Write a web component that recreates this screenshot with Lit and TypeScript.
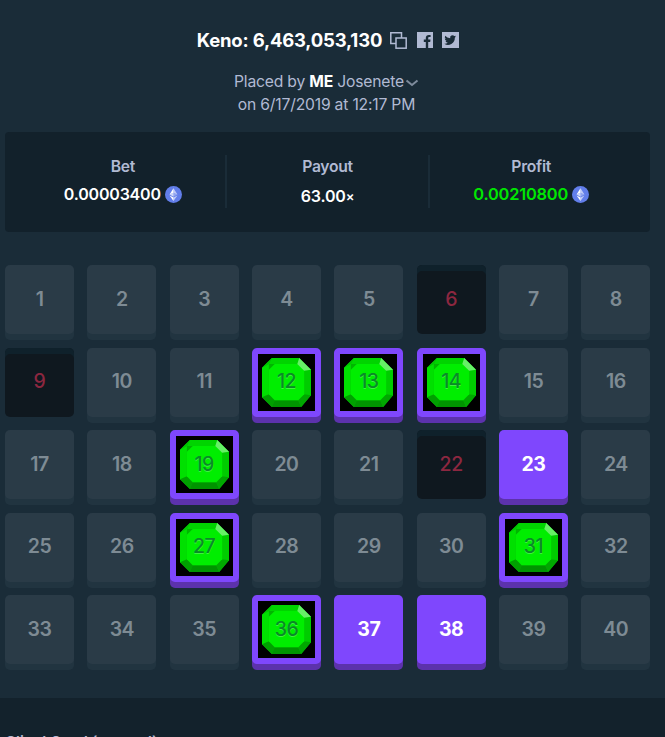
import { LitElement, html, css, svg } from "lit";
import { customElement } from "lit/decorators.js";

const HITS = new Set([12, 13, 14, 19, 27, 31, 36]);
const PICKED = new Set([23, 37, 38]);
const MISS = new Set([6, 9, 22]);

const eth = html`<svg class="eth" viewBox="0 0 16 16"><circle cx="8" cy="8" r="8" fill="#627eea"/><path d="M8 2v4.400l3.700 1.700z" fill="#fff" opacity=".6"/><path d="M8 2 4.300 8.100 8 6.400z" fill="#fff"/><path d="M8 10.900v3.100l3.700-5.100z" fill="#fff" opacity=".6"/><path d="M8 10.900V14L4.300 8.900z" fill="#fff"/><path d="M8 10.200l3.700-2.100L8 6.400z" fill="#fff" opacity=".3"/><path d="M4.300 8.100 8 10.200V6.400z" fill="#fff" opacity=".7"/></svg>`;

const gem = svg`<svg class="gem" viewBox="0 0 50 50">
<polygon points="10,0 38,0 50,12 50,38 40,50 10,50 0,40 0,10" fill="#00b500"/>
<polygon points="10,0 38,0 42,6 7,6" fill="#00d400"/>
<polygon points="0,10 10,0 7,6" fill="#00c400"/>
<polygon points="0,10 7,6 7,43 0,40" fill="#00e000"/>
<polygon points="50,12 42,6 43,43 50,38" fill="#00cc00"/>
<polygon points="0,40 7,37 13,43 10,50" fill="#00a000"/>
<polygon points="10,50 13,43 37,43 40,50" fill="#009400"/>
<polygon points="50,38 43,37 37,43 40,50" fill="#00a800"/>
<polygon points="13,6 37,6 43,12 43,37 37,43 13,43 7,37 7,12" fill="#00ee00"/>
<polygon points="38,0 50,12 43,13 36,6" fill="#66f066"/>
</svg>`;

@customElement("app-root")
export class AppRoot extends LitElement {
  static styles = css`
    :host { display: block; height: 737px; overflow: hidden; background: #1a2c38; color: #fff;
      font-family: "Inter", "Liberation Sans", sans-serif; }
    .head { display: flex; flex-direction: column; align-items: center; padding: 28px 9px 0 0; height: 104px; box-sizing: border-box; }
    .title { display: flex; align-items: center; font-size: 18.5px; font-weight: 700; line-height: 24px; height: 24px; letter-spacing: -0.2px; }
    .title svg { display: block; }
    .copy { width: 17px; height: 17px; margin-left: 8px; }
    .fb { width: 16px; height: 16px; margin-left: 10px; }
    .tw { width: 17px; height: 16px; margin-left: 9px; }
    .by { margin-top: 18px; font-size: 15.7px; line-height: 23px; color: #b1bad3; text-align: center; letter-spacing: -0.2px; padding-right: 3px; }
    .by b { color: #fff; font-weight: 700; }
    .by svg { width: 14px; height: 8px; margin-left: 1px; }
    .stats { margin: 28px 15px 0 5px; height: 100px; box-sizing: border-box; background: #12212b; border-radius: 4px;
      display: grid; grid-template-columns: 1fr 1fr 1fr; padding: 23px 18px 0 16px; }
    .stat { height: 53px; display: flex; flex-direction: column; align-items: center; }
    .stat + .stat { border-left: 2px solid #1a2c38; }
    .lab { font-size: 15.7px; line-height: 22px; color: #b1bad3; font-weight: 600; letter-spacing: -0.3px; padding-top: 1px; }
    .val { display: flex; align-items: center; font-size: 16px; font-weight: 600; line-height: 22px; margin-top: 5px; letter-spacing: -0.2px; }
    .val.pay { margin-top: 7px; }
    .val small { font-size: 13px; }
    .win { color: #00e701; font-size: 16.4px; }
    .eth { width: 17px; height: 17px; margin-left: 4px; }
    .grid { margin: 33px 14.7px 0 5px; display: grid; grid-template-columns: repeat(8, 69px); justify-content: space-between; row-gap: 7.5px; }
    .t { position: relative; height: 75px; box-sizing: border-box; }
    .face { height: 69px; border-radius: 5px; background: #2a3b47; box-shadow: 0 6px 0 #213440; display: flex;
      align-items: center; justify-content: center; font-size: 19.5px; font-weight: 600; color: #7e8b94; box-sizing: border-box;
      letter-spacing: -0.5px; padding-bottom: 2px; }
    .picked .face { background: #7f47fd; box-shadow: 0 6px 0 #5c32ac; color: #fff; font-weight: 700; }
    .hit .face { position: relative; background: #000; border: 6px solid #7f47fd; box-shadow: 0 6px 0 #5c32ac; }
    .gem { position: absolute; left: 4px; top: 4px; width: 49px; height: 49px; }
    .num { position: relative; font-weight: 500; color: #0a8a28; text-shadow: 0 1px 0 rgba(255, 255, 255, 0.25); }
    .miss .face { background: #0f181f; box-shadow: inset 0 6px 0 #0f212b; color: #8c2740; font-weight: 500; }
    .foot { margin-top: 28px; height: 60px; background: #13222c; padding: 34px 0 0 5px; box-sizing: border-box;
      font-size: 15px; font-weight: 600; color: #b1bad3; }
  `;

  render() {
    const nums = Array.from({ length: 40 }, (_, i) => i + 1);
    return html`
      <div class="head">
        <div class="title">Keno: 6,463,053,130
          <svg class="copy" viewBox="0 0 17 17" fill="none" stroke="#b1bad3" stroke-width="1.500"><path d="M6 11.500H.8V.8h10.700V6"/><rect x="6" y="6" width="10.200" height="10.200"/></svg>
          <svg class="fb" viewBox="0 0 16 16"><path fill="#b1bad3" d="M0 0h16v16h-4.800v-6h2l.3-2.400h-2.300V6.200c0-.7.2-1.100 1.200-1.100h1.200V3c-.3 0-1-.1-1.800-.1-1.800 0-3 1.100-3 3.100v1.600h-2V10h2v6H0z"/></svg>
          <svg class="tw" viewBox="0 0 17 16"><path fill="#b1bad3" fill-rule="evenodd" d="M0 0h17v16H0zM14 4.300c-.4.2-.9.3-1.300.4.5-.3.8-.7 1-1.300-.4.3-.9.5-1.400.6a2.400 2.400 0 0 0-4.100 2.200A6.700 6.700 0 0 1 3.200 3.700a2.400 2.400 0 0 0 .7 3.200c-.4 0-.8-.1-1.100-.3 0 1.200.8 2.200 1.900 2.400-.4.100-.7.100-1.100 0 .3 1 1.200 1.700 2.200 1.700A4.800 4.800 0 0 1 2.300 11.700a6.800 6.800 0 0 0 10.500-6c.5-.4.900-.8 1.200-1.400z"/></svg>
        </div>
        <div class="by">Placed by <b>ME</b> Josenete<svg viewBox="0 0 14 8" fill="none" stroke="#7e8b9c" stroke-width="2"><path d="M1.500 1.500 7 6l5.500-4.500"/></svg><br>on 6/17/2019 at 12:17 PM</div>
      </div>
      <div class="stats">
        <div class="stat"><div class="lab">Bet</div><div class="val">0.00003400${eth}</div></div>
        <div class="stat"><div class="lab">Payout</div><div class="val pay">63.00<small>×</small></div></div>
        <div class="stat"><div class="lab">Profit</div><div class="val win">0.00210800${eth}</div></div>
      </div>
      <div class="grid">
        ${nums.map((n) => {
          const cls = HITS.has(n) ? "hit" : PICKED.has(n) ? "picked" : MISS.has(n) ? "miss" : "";
          return html`<div class="t ${cls}"><div class="face">${HITS.has(n) ? gem : ""}<span class=${HITS.has(n) ? "num" : ""}>${n}</span></div></div>`;
        })}
      </div>
      <div class="foot">Client Seed (opened)</div>
    `;
  }
}
